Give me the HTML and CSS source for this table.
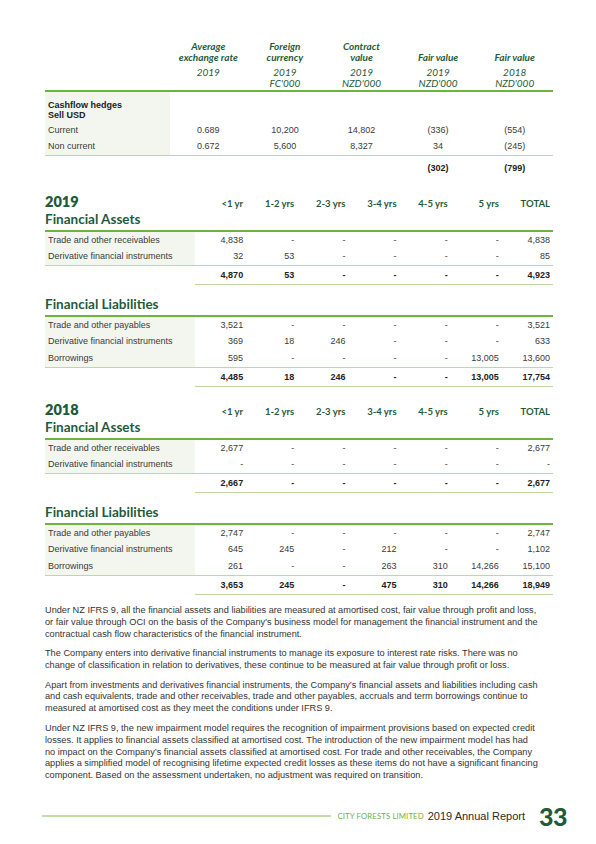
FILE: index.html
```html
<!DOCTYPE html>
<html>
<head>
<meta charset="utf-8">
<link rel="stylesheet" href="styles.css">
</head>
<body>
<div class="page">
  <div class="fx">
    <div class="fx-row fx-head">
      <div></div>
      <div class="hc"><div class="ht">Average<br>exchange rate</div><div class="hy">2019</div><div class="hu">&nbsp;</div></div>
      <div class="hc"><div class="ht">Foreign<br>currency</div><div class="hy">2019</div><div class="hu">FC'000</div></div>
      <div class="hc"><div class="ht">Contract<br>value</div><div class="hy">2019</div><div class="hu">NZD'000</div></div>
      <div class="hc"><div class="ht">Fair value</div><div class="hy">2019</div><div class="hu">NZD'000</div></div>
      <div class="hc"><div class="ht">Fair value</div><div class="hy">2018</div><div class="hu">NZD'000</div></div>
    </div>
    <div class="fx-row">
      <div class="lab lab-group">Cashflow hedges<br>Sell USD</div>
      <div></div><div></div><div></div><div></div><div></div>
    </div>
    <div class="fx-row fx-data">
      <div class="lab">Current</div>
      <div class="c">0.689</div><div class="c">10,200</div><div class="c">14,802</div><div class="c">(336)</div><div class="c">(554)</div>
    </div>
    <div class="fx-row fx-data fx-last">
      <div class="lab">Non current</div>
      <div class="c">0.672</div><div class="c">5,600</div><div class="c">8,327</div><div class="c">34</div><div class="c">(245)</div>
    </div>
    <div class="fx-row fx-data fx-total">
      <div></div>
      <div class="c"></div><div class="c"></div><div class="c"></div><div class="c">(302)</div><div class="c">(799)</div>
    </div>
  </div>

  <section class="mat">
    <div class="mrow mhead">
      <div class="year">2019</div>
      <div class="ch">&lt;1 yr</div><div class="ch">1-2 yrs</div><div class="ch">2-3 yrs</div><div class="ch">3-4 yrs</div><div class="ch">4-5 yrs</div><div class="ch">5 yrs</div><div class="ch">TOTAL</div>
    </div>
    <h2 class="sub">Financial Assets</h2>
    <div class="mrow"><div class="lab">Trade and other receivables</div><div class="n">4,838</div><div class="n">-</div><div class="n">-</div><div class="n">-</div><div class="n">-</div><div class="n">-</div><div class="n">4,838</div></div>
    <div class="mrow mlast"><div class="lab">Derivative financial instruments</div><div class="n">32</div><div class="n">53</div><div class="n">-</div><div class="n">-</div><div class="n">-</div><div class="n">-</div><div class="n">85</div></div>
    <div class="mrow mtotal"><div></div><div class="n">4,870</div><div class="n">53</div><div class="n">-</div><div class="n">-</div><div class="n">-</div><div class="n">-</div><div class="n">4,923</div></div>

    <h2 class="sub sub-gap">Financial Liabilities</h2>
    <div class="mrow"><div class="lab">Trade and other payables</div><div class="n">3,521</div><div class="n">-</div><div class="n">-</div><div class="n">-</div><div class="n">-</div><div class="n">-</div><div class="n">3,521</div></div>
    <div class="mrow"><div class="lab">Derivative financial instruments</div><div class="n">369</div><div class="n">18</div><div class="n">246</div><div class="n">-</div><div class="n">-</div><div class="n">-</div><div class="n">633</div></div>
    <div class="mrow mlast"><div class="lab">Borrowings</div><div class="n">595</div><div class="n">-</div><div class="n">-</div><div class="n">-</div><div class="n">-</div><div class="n">13,005</div><div class="n">13,600</div></div>
    <div class="mrow mtotal"><div></div><div class="n">4,485</div><div class="n">18</div><div class="n">246</div><div class="n">-</div><div class="n">-</div><div class="n">13,005</div><div class="n">17,754</div></div>
  </section>

  <section class="mat">
    <div class="mrow mhead">
      <div class="year">2018</div>
      <div class="ch">&lt;1 yr</div><div class="ch">1-2 yrs</div><div class="ch">2-3 yrs</div><div class="ch">3-4 yrs</div><div class="ch">4-5 yrs</div><div class="ch">5 yrs</div><div class="ch">TOTAL</div>
    </div>
    <h2 class="sub">Financial Assets</h2>
    <div class="mrow"><div class="lab">Trade and other receivables</div><div class="n">2,677</div><div class="n">-</div><div class="n">-</div><div class="n">-</div><div class="n">-</div><div class="n">-</div><div class="n">2,677</div></div>
    <div class="mrow mlast"><div class="lab">Derivative financial instruments</div><div class="n">-</div><div class="n">-</div><div class="n">-</div><div class="n">-</div><div class="n">-</div><div class="n">-</div><div class="n">-</div></div>
    <div class="mrow mtotal"><div></div><div class="n">2,667</div><div class="n">-</div><div class="n">-</div><div class="n">-</div><div class="n">-</div><div class="n">-</div><div class="n">2,677</div></div>

    <h2 class="sub sub-gap">Financial Liabilities</h2>
    <div class="mrow"><div class="lab">Trade and other payables</div><div class="n">2,747</div><div class="n">-</div><div class="n">-</div><div class="n">-</div><div class="n">-</div><div class="n">-</div><div class="n">2,747</div></div>
    <div class="mrow"><div class="lab">Derivative financial instruments</div><div class="n">645</div><div class="n">245</div><div class="n">-</div><div class="n">212</div><div class="n">-</div><div class="n">-</div><div class="n">1,102</div></div>
    <div class="mrow mlast"><div class="lab">Borrowings</div><div class="n">261</div><div class="n">-</div><div class="n">-</div><div class="n">263</div><div class="n">310</div><div class="n">14,266</div><div class="n">15,100</div></div>
    <div class="mrow mtotal"><div></div><div class="n">3,653</div><div class="n">245</div><div class="n">-</div><div class="n">475</div><div class="n">310</div><div class="n">14,266</div><div class="n">18,949</div></div>
  </section>

  <div class="text">
    <p>Under NZ IFRS 9, all the financial assets and liabilities are measured at amortised cost, fair value through profit and loss, or fair value through OCI on the basis of the Company’s business model for management the financial instrument and the contractual cash flow characteristics of the financial instrument.</p>
    <p>The Company enters into derivative financial instruments to manage its exposure to interest rate risks. There was no change of classification in relation to derivatives, these continue to be measured at fair value through profit or loss.</p>
    <p>Apart from investments and derivatives financial instruments, the Company’s financial assets and liabilities including cash and cash equivalents, trade and other receivables, trade and other payables, accruals and term borrowings continue to measured at amortised cost as they meet the conditions under IFRS 9.</p>
    <p>Under NZ IFRS 9, the new impairment model requires the recognition of impairment provisions based on expected credit losses. It applies to financial assets classified at amortised cost. The introduction of the new impairment model has had no impact on the Company’s financial assets classified at amortised cost. For trade and other receivables, the Company applies a simplified model of recognising lifetime expected credit losses as these items do not have a significant financing component. Based on the assessment undertaken, no adjustment was required on transition.</p>
  </div>

  <footer class="foot">
    <span class="foot-line"></span>
    <span class="foot-co">CITY FORESTS LIMITED</span>
    <span class="foot-rep">2019 Annual Report</span>
    <span class="foot-num">33</span>
  </footer>
</div>
</body>
</html>
```
FILE: styles.css
```css
* { box-sizing: border-box; }
html, body { margin: 0; padding: 0; background: #fff; }
body {
  font-family: "Liberation Sans", Arial, sans-serif;
  color: #3a3a3a;
  font-size: 9px;
}
.page {
  width: 596px;
  height: 844px;
  padding: 40px 43px 0 45px;
  display: flex;
  flex-direction: column;
}

/* FX table */
.fx-row {
  display: grid;
  grid-template-columns: 125px repeat(5, 1fr);
}
.fx-head { border-bottom: 2px solid #6db33f; padding-bottom: 1px; padding-top: 1px; }
.hc {
  text-align: center;
  font-family: Lato, "Open Sans", sans-serif;
  font-style: italic;
  color: #1f5b3b;
  font-size: 10px;
  line-height: 11px;
}
.ht {
  font-weight: 700;
  min-height: 22px;
  display: flex;
  flex-direction: column;
  justify-content: flex-end;
}
.hy { margin-top: 4px; }
.lab { background: #f3f6ef; padding-left: 3px; }
.lab-group {
  font-weight: 700;
  color: #222;
  line-height: 10px;
  padding-top: 8px;
  padding-bottom: 2px;
}
.fx-data { height: 16px; line-height: 16px; }
.fx-data .c { text-align: center; }
.fx-last { border-bottom: 1.5px solid #bcd8a4; height: 17.5px; }
.fx-total { height: 22px; line-height: 18px; padding-top: 3px; font-weight: 700; color: #222; }

/* maturity tables */
.mat { margin-top: 14px; }
.mat + .mat { margin-top: 13px; }
.mrow {
  display: grid;
  grid-template-columns: 150px repeat(7, 1fr);
  height: 16.5px;
  line-height: 16.5px;
}
.mrow .n { text-align: right; padding-right: 3px; }
.mhead { height: 19px; line-height: 19px; align-items: baseline; }
.year {
  font-family: Lato, "Open Sans", sans-serif;
  font-weight: 800;
  font-size: 14.5px;
  color: #1f5b3b;
}
.ch {
  font-family: Lato, "Open Sans", sans-serif;
  font-weight: 700;
  font-size: 9.5px;
  color: #1f5b3b;
  text-align: right;
  padding-right: 3px;
}
.sub {
  margin: 0;
  font-family: Lato, "Open Sans", sans-serif;
  font-weight: 700;
  font-size: 13.5px;
  line-height: 17px;
  color: #1f5b3b;
  padding-bottom: 2px;
  border-bottom: 2px solid #6db33f;
}
.sub-gap { margin-top: 10.5px; }
.mlast { border-bottom: 1.5px solid #bcd8a4; height: 18px; }
.mtotal { font-weight: 700; color: #222; height: 19px; line-height: 18px; }
.mtotal .n { border-bottom: 1.5px solid #bcd8a4; }

/* text */
.text { margin-top: 10.5px; width: 494px; }
.text p {
  margin: 0 0 7.5px;
  font-size: 9.2px;
  line-height: 11.9px;
  color: #333;
}

/* footer */
.foot {
  margin-top: auto;
  margin-bottom: 16px;
  margin-left: -3px;
  margin-right: -14px;
  display: flex;
  align-items: center;
  height: 24px;
  white-space: nowrap;
}
.foot-line {
  flex: 1 1 auto;
  height: 1.5px;
  background: #c2dcaa;
}
.foot-co {
  flex: none;
  font-family: Lato, "Open Sans", sans-serif;
  font-size: 7.8px;
  color: #6db33f;
  letter-spacing: 0.1px;
  margin-left: 7px;
}
.foot-rep {
  flex: none;
  font-size: 11px;
  color: #2a2a2a;
  margin-left: 4px;
}
.foot-num {
  flex: none;
  font-family: Lato, "Open Sans", sans-serif;
  font-weight: 900;
  font-size: 25px;
  letter-spacing: -0.5px;
  color: #1f5b3b;
  margin-left: 14px;
  line-height: 24px;
}
```
